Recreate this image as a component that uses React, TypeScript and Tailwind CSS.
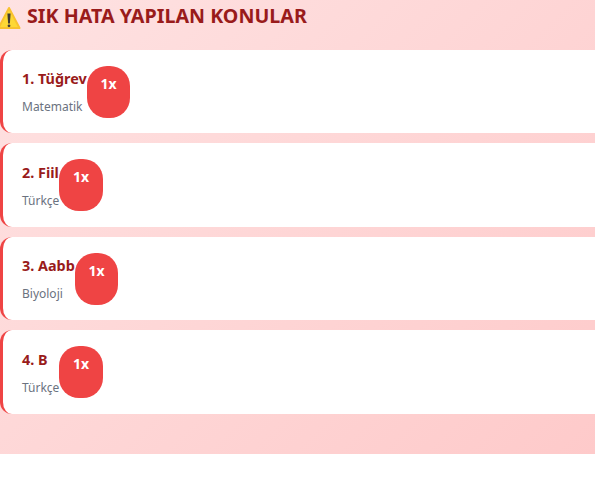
const items = [
  { name: "1. Tüğrev", sub: "Matematik" },
  { name: "2. Fiil", sub: "Türkçe" },
  { name: "3. Aabb", sub: "Biyoloji" },
  { name: "4. B", sub: "Türkçe" },
];

export default function App() {
  return (
    <div className="h-[454px] bg-[linear-gradient(135deg,#fee2e2,#fecaca)] font-['Noto_Sans',sans-serif] overflow-hidden">
      <h2 className="flex items-center h-[32px] text-[19.7px] font-bold text-[#991b1b] leading-[32px] mb-[17.8px] whitespace-nowrap">
        <span className="w-[27px] shrink-0">
          <svg width="24" height="24" viewBox="0 0 24 24" className="mt-[3px] -ml-[2px]">
            <path d="M11 2 L21.5 22 H0.5 Z" fill="#fdd835" stroke="#f9c22e" strokeWidth="2" strokeLinejoin="round" />
            <path d="M9.4 7.5 h3.2 l-.7 10 h-1.8 Z" fill="#3f3a34" />
            <circle cx="11" cy="19.8" r="1.4" fill="#3f3a34" />
          </svg>
        </span>
        SIK HATA YAPILAN KONULAR
      </h2>
      <div className="flex flex-col gap-[10px]">
        {items.map((it) => (
          <div key={it.name} className="h-[83.5px] bg-white rounded-l-[12px] border-l-[3px] border-[#ef4444] pl-[19px] flex items-center">
            <div className="pt-[1px]">
              <div className="text-[14.4px] font-bold leading-[19px] text-[#991b1b]">{it.name}</div>
              <div className="text-[12px] leading-[16px] text-[#6b7280] mt-[11px]">{it.sub}</div>
            </div>
            <span className="w-[43.5px] h-[52px] rounded-[20px] bg-[#ef4444] text-white text-[14px] font-bold leading-[19px] pt-[8px] text-center">1x</span>
          </div>
        ))}
      </div>
    </div>
  );
}
